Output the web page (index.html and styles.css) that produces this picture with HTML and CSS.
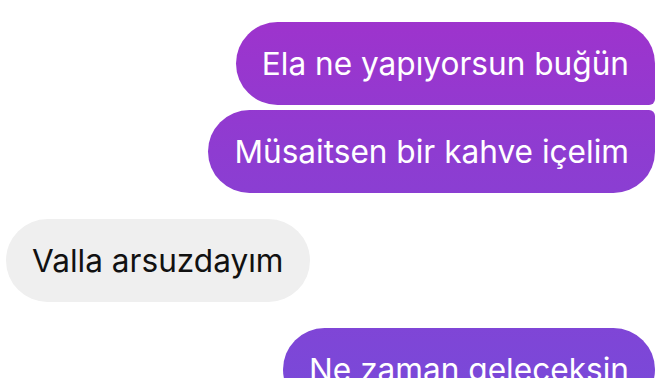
FILE: index.html
```html
<!DOCTYPE html>
<html lang="tr">

<head>
    <meta charset="UTF-8">
    <title>Sohbet</title>
    <link rel="stylesheet" href="styles.css">
</head>

<body>
    <section id="sohbet">
        <div class="grup benim">
            <p class="balon ilk">Ela ne yapıyorsun buğün</p>
            <p class="balon son">Müsaitsen bir kahve içelim</p>
        </div>
        <div class="grup onun">
            <p class="balon">Valla arsuzdayım</p>
        </div>
        <div class="grup benim">
            <p class="balon">Ne zaman geleceksin</p>
        </div>
    </section>
</body></html>
```

FILE: styles.css
```css
body {
    margin: 0;
    background-color: #fff;
    font-family: Inter, "Noto Sans", sans-serif;
    overflow: hidden;
}

#sohbet {
    width: 672px;
    height: 378px;
    padding: 22px 17px 0 6px;
    box-sizing: border-box;
    display: flex;
    flex-direction: column;
    gap: 26px;
}

.grup {
    display: flex;
    flex-direction: column;
    gap: 5px;
}

.benim {
    align-items: flex-end;
}

.onun {
    align-items: flex-start;
}

.balon {
    margin: 0;
    padding: 22px 26px 21px;
    font-size: 31.6px;
    line-height: 40px;
    border-radius: 42px;
    white-space: nowrap;
}

.benim .balon {
    color: #fff;
    background: linear-gradient(180deg, #a032cc 0%, #8e3cd1 40%, #7b48d8 100%);
    background-attachment: fixed;
}

.benim .ilk {
    border-bottom-right-radius: 6px;
}

.benim .son {
    border-top-right-radius: 6px;
}

.onun .balon {
    color: #111;
    background-color: #efefef;
}
```
